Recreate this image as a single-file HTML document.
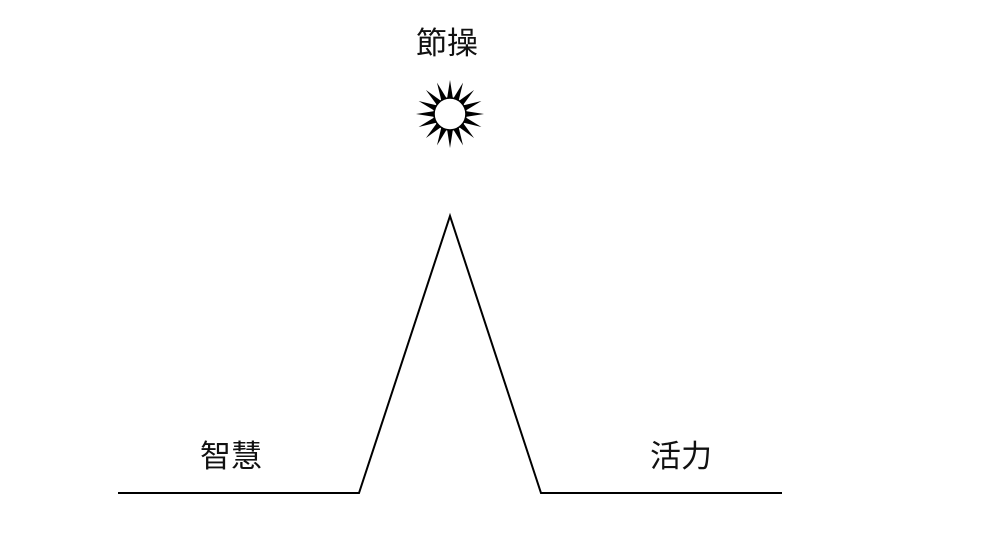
<!DOCTYPE html>
<html><head><meta charset="utf-8"><style>
html,body{margin:0;padding:0;background:#fff;width:1000px;height:536px;overflow:hidden}
text{font-family:"Liberation Sans","Noto Sans CJK JP",sans-serif;font-size:31px;fill:#111}
</style></head><body>
<svg width="1000" height="536" viewBox="0 0 1000 536" xmlns="http://www.w3.org/2000/svg">
<rect width="1000" height="536" fill="#fff"/>
<polyline points="118,493 359,493 450,216 541,493 782,493" fill="none" stroke="#000" stroke-width="2"/>
<text x="447" y="54" text-anchor="middle">節操</text>
<text x="231" y="467" text-anchor="middle">智慧</text>
<text x="681" y="467" text-anchor="middle">活力</text>
<g transform="translate(450,114)">
<g id="r"><polygon points="-3,-15 0,-34 3,-15" fill="#000"/></g>
<use href="#r" transform="rotate(22.5)"/><use href="#r" transform="rotate(45)"/><use href="#r" transform="rotate(67.5)"/>
<use href="#r" transform="rotate(90)"/><use href="#r" transform="rotate(112.5)"/><use href="#r" transform="rotate(135)"/>
<use href="#r" transform="rotate(157.5)"/><use href="#r" transform="rotate(180)"/><use href="#r" transform="rotate(202.5)"/>
<use href="#r" transform="rotate(225)"/><use href="#r" transform="rotate(247.5)"/><use href="#r" transform="rotate(270)"/>
<use href="#r" transform="rotate(292.5)"/><use href="#r" transform="rotate(315)"/><use href="#r" transform="rotate(337.5)"/>
<circle r="16" fill="#fff" stroke="#000" stroke-width="1.6"/>
</g>
</svg>
</body></html>
